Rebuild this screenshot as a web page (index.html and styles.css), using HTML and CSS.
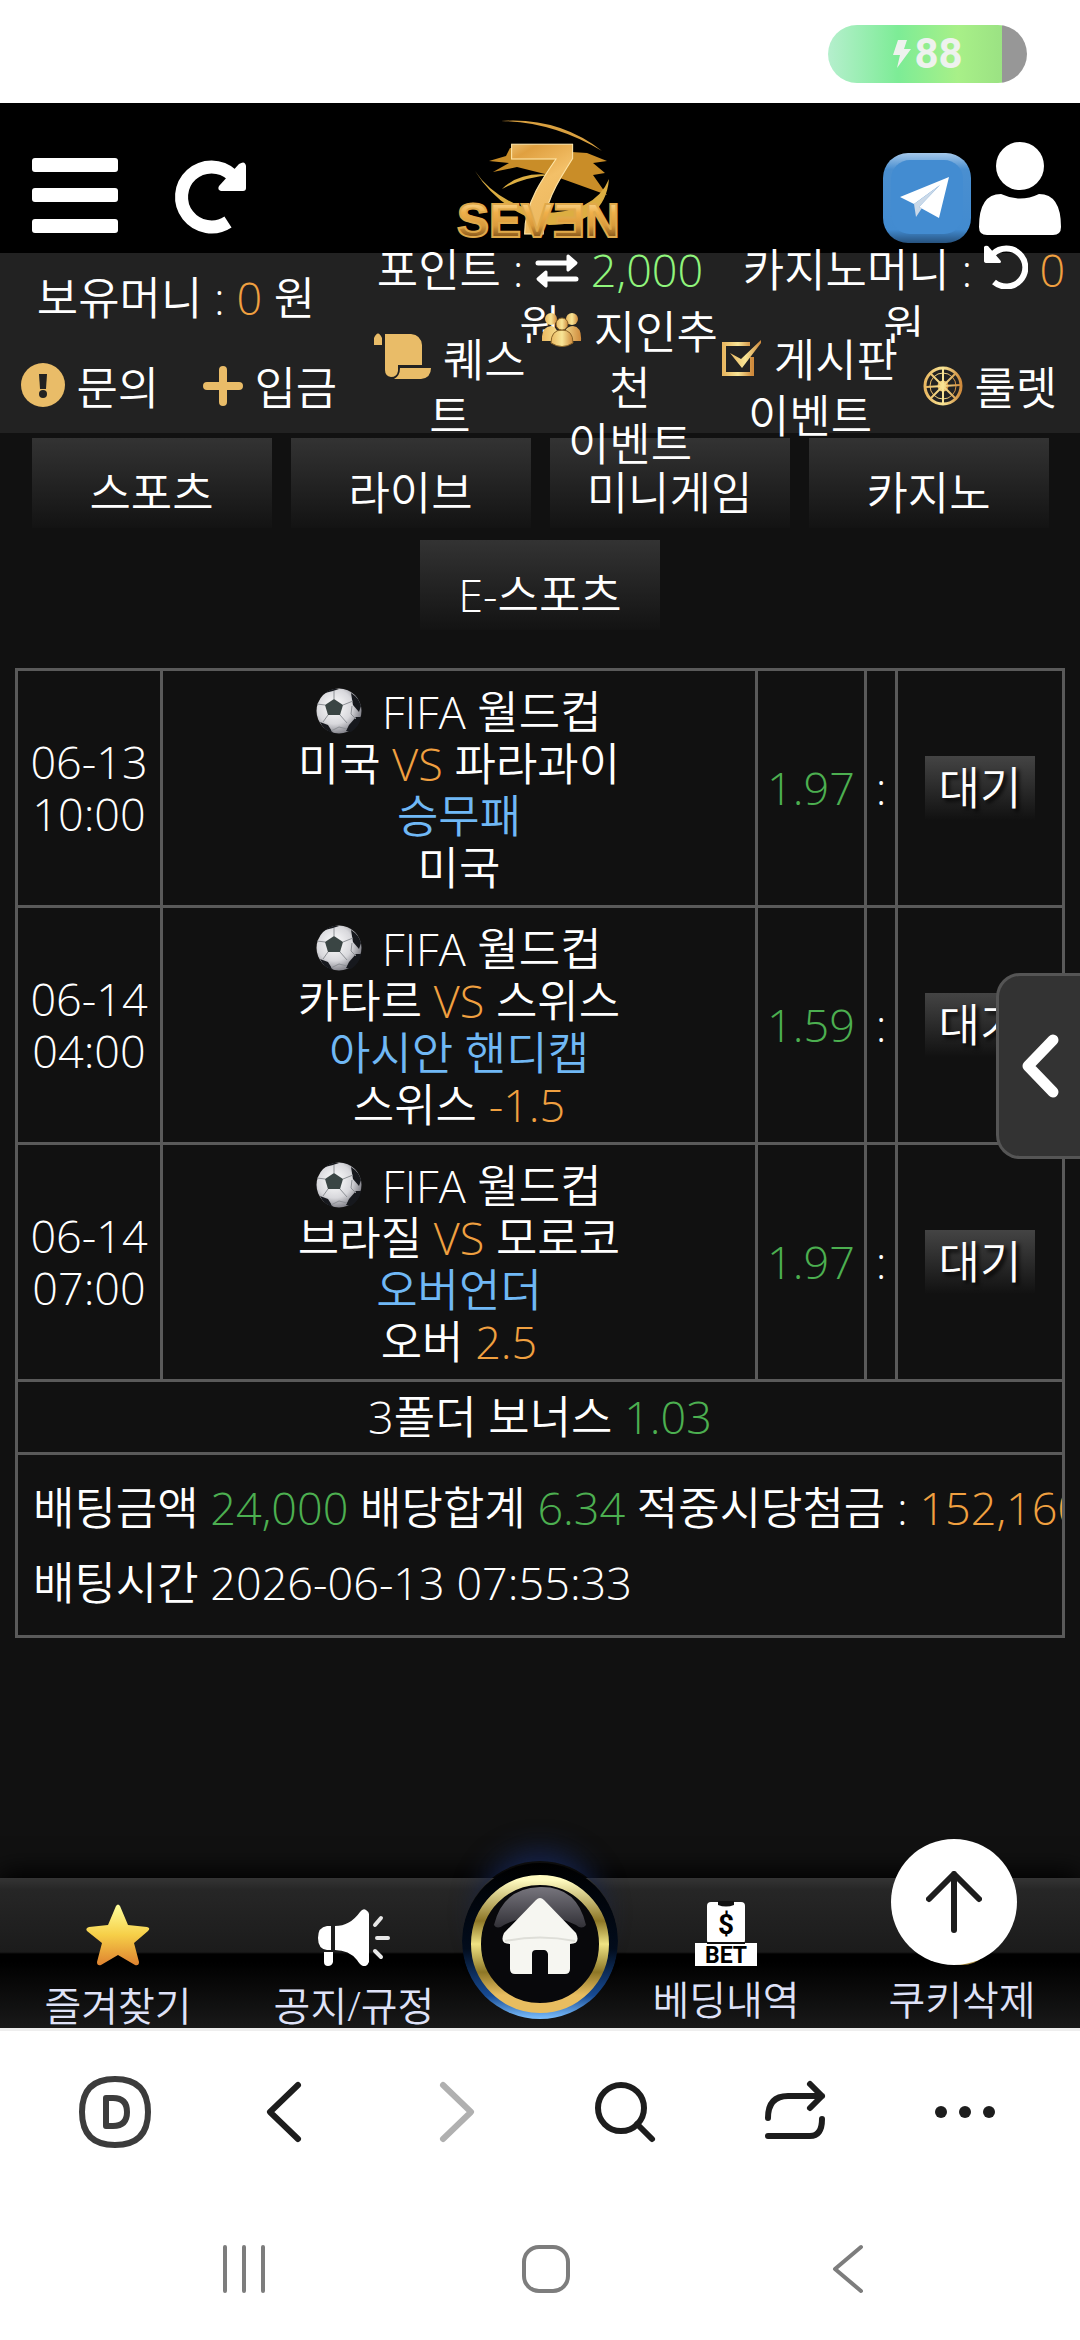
FILE: index.html
```html
<!DOCTYPE html>
<html lang="ko">
<head>
    <meta charset="utf-8">
    <meta name="viewport" content="width=device-width">
    <title>SEVEN</title>
    <link rel="stylesheet" href="styles.css">
</head>
<body>

<!-- Shared icons and gradients -->
<svg class="defs" width="0" height="0">
    <defs>
        <linearGradient id="gold" x1="0" y1="0" x2="0" y2="1">
            <stop offset="0" stop-color="#fff3c4"/>
            <stop offset="0.35" stop-color="#f0b04a"/>
            <stop offset="0.6" stop-color="#d99a3c"/>
            <stop offset="0.8" stop-color="#8a5a1c"/>
            <stop offset="1" stop-color="#f2c766"/>
        </linearGradient>
        <linearGradient id="gold2" x1="0" y1="0" x2="1" y2="0">
            <stop offset="0" stop-color="#e9b862"/>
            <stop offset="0.5" stop-color="#f8e596"/>
            <stop offset="1" stop-color="#cf8a3c"/>
        </linearGradient>
        <linearGradient id="gold3" x1="0" y1="0" x2="0.3" y2="1">
            <stop offset="0" stop-color="#fff0b8"/>
            <stop offset="0.3" stop-color="#e0a040"/>
            <stop offset="0.55" stop-color="#f3c068"/>
            <stop offset="1" stop-color="#e8b45c"/>
        </linearGradient>
        <radialGradient id="leather" cx="0.4" cy="0.4" r="0.65">
            <stop offset="0" stop-color="#ffffff"/>
            <stop offset="0.6" stop-color="#d8d8dc"/>
            <stop offset="1" stop-color="#77777f"/>
        </radialGradient>
    </defs>
    <symbol id="ball" viewBox="0 0 46 46">
        <circle cx="23" cy="23" r="22.5" fill="url(#leather)"/>
        <path d="M18 11l9 6-3 10H12L9 17z" fill="#3a4544"/>
        <path d="M35 5q8 5 10 13l-2 6-6-7zM45 29q-1 9-10 15l-5-1 3-6 7-8zM4 34l8 3 5 8Q8 43 4 34zM9 5Q16 0 23 1l-6 2z" fill="#16181d"/>
        <path d="M18 11V3M27 17l10-4M24 27l7 8M12 27l-5 7M9 17l-8-1M15 43l8-4 8 2M36 18l-1 8 5 5" fill="none" stroke="#8d9095" stroke-width="1"/>
    </symbol>
</svg>

<div class="status-bar">
    <div class="battery">
        <svg width="20" height="30" viewBox="0 0 20 30"><path d="M6 1h9l-3 9h7L5 29l3-13H1z" fill="#eef2ee"/></svg>
        <span>88</span>
    </div>
</div>

<header class="header">
    <div class="header-left">
        <button class="icon-btn" aria-label="menu">
            <svg width="86" height="94" viewBox="0 0 86 94" fill="#fff">
                <rect y="9" width="86" height="14" rx="3"/>
                <rect y="39" width="86" height="14" rx="3"/>
                <rect y="70" width="86" height="14" rx="3"/>
            </svg>
        </button>
        <button class="icon-btn" aria-label="refresh">
            <svg width="76" height="94" viewBox="0 0 76 94">
                <path d="M56 73A30 30 0 1 1 60 26" fill="none" stroke="#fff" stroke-width="13"/>
                <path d="M74 17v22q0 3-3 3H49q-4-1-2-5L67 15q6-4 7 2z" fill="#fff"/>
            </svg>
        </button>
    </div>
    <a class="logo" href="#" aria-label="SEVEN">
        <svg width="168" height="124" viewBox="0 0 168 124">
            <path d="M45 2q58-4 101 30Q98 3 45 2z" fill="#d9a040"/>
            <path d="M54 29l-4 8-17 5 20 2-16 9 24-5 40 10 50 18-14-20 12-2-12-10 14-2-20-8z" fill="#c98d28"/>
            <path d="M46 70q18-18 50-14-28 2-50 14zM19 52q20 30 66 42 54 0 68-34-4 46-60 46Q44 92 19 52z" fill="#dcae42"/>
            <text class="logo-seven" x="50" y="115" fill="url(#gold3)" stroke="#ffe6a8" stroke-width="1">7</text>
            <text class="logo-name" x="1" y="118" fill="url(#gold)" stroke="#e0a94a" stroke-width="2">SEVƎN</text>
        </svg>
    </a>
    <div class="header-right">
        <a href="#" aria-label="telegram">
            <svg width="90" height="94" viewBox="0 0 90 94">
                <defs>
                    <linearGradient id="tg" x1="0" y1="0" x2="0" y2="1">
                        <stop offset="0" stop-color="#a5c8ea"/>
                        <stop offset="0.18" stop-color="#4a8fd0"/>
                        <stop offset="0.85" stop-color="#428bd0"/>
                        <stop offset="1" stop-color="#27527e"/>
                    </linearGradient>
                </defs>
                <rect x="1" y="4" width="88" height="90" rx="25" fill="url(#tg)"/>
                <rect x="9" y="11" width="72" height="74" rx="19" fill="#438cd1"/>
                <path d="M67 28L18 48l14 7 26-19-21 22 20 11z" fill="#fff"/>
                <path d="M32 55l2 13 6-9-3-1 21-22z" fill="#cbd9e8"/>
            </svg>
        </a>
        <a href="#" aria-label="my page">
            <svg width="84" height="102" viewBox="0 0 84 102" fill="#fff">
                <circle cx="42" cy="25" r="24"/>
                <path d="M1 86q0-33 22-33 19 9 38 0 22 0 22 33 0 8-8 8H9q-8 0-8-8z"/>
            </svg>
        </a>
    </div>
</header>

<div class="info">
    <div class="info-row money">
        <div>보유머니 : <span class="orange">0</span> 원</div>
        <div>포인트 :
            <svg width="44" height="36" viewBox="0 0 44 36" fill="none" stroke="#fff" stroke-width="5" stroke-linecap="round"><path d="M3 10h32M41 26H9"/><path d="M33 3l8 7-8 7zM11 19l-8 7 8 7z" fill="#fff" stroke-width="3" stroke-linejoin="round"/></svg>
            <span class="lime">2,000</span><br>원</div>
        <div>카지노머니 :
            <svg width="44" height="46" viewBox="0 0 44 46"><path d="M10 39A19 19 0 1 0 9 11" fill="none" stroke="#fff" stroke-width="6"/><path d="M0 4v14q0 2 3 2h13q2-1 0-3L4 3Q1 2 0 4z" fill="#fff"/></svg>
            <span class="orange">0</span><br>원</div>
    </div>
    <div class="info-row links">
        <a href="#"><svg width="44" height="44" viewBox="0 0 44 44"><circle cx="22" cy="22" r="22" fill="#e9bc68"/><path d="M18 11h8l-1 15h-6z" fill="#222"/><circle cx="22" cy="31" r="4" fill="#222"/></svg> 문의</a>
        <a href="#"><svg width="40" height="44" viewBox="0 0 40 44"><path d="M20 7v32M4 23h32" stroke="#e9bc68" stroke-width="8" stroke-linecap="round"/></svg> 입금</a>
        <a href="#"><svg width="57" height="46" viewBox="0 0 57 46" fill="#e9bc68"><path d="M0 12V5q4-9 8 0v7zM11 1h26q10 1 11 11v20H24v6q-1 6-7 6-6-1-6-7z"/><path d="M26 35h31q0 10-10 11H20q6-3 6-11z"/></svg> 퀘스<br>트</a>
        <a href="#"><svg width="40" height="44" viewBox="0 0 40 44" fill="url(#gold2)"><circle cx="9" cy="12" r="6"/><circle cx="30" cy="12" r="6"/><path d="M0 34q-1-14 9-15 6 0 10 15zM20 34q2-15 11-15 9 1 8 15z"/><g stroke="#8a6428" stroke-width="1"><path d="M9 36q0-13 11-13t11 13q-11 7-22 0z"/><circle cx="20" cy="17" r="6"/></g></svg> 지인추<br>천<br>이벤트</a>
        <a href="#"><svg width="40" height="44" viewBox="0 0 40 44"><path d="M30 22v17H2V9h26" fill="none" stroke="url(#gold2)" stroke-width="4"/><path d="M8 18l11 6L39 5v3L20 33z" fill="url(#gold2)"/></svg> 게시판<br>이벤트</a>
        <a href="#"><svg width="40" height="44" viewBox="0 0 40 44" fill="none" stroke="url(#gold2)" stroke-width="3"><circle cx="20" cy="23" r="18"/><circle cx="20" cy="23" r="13" stroke-width="1"/><circle cx="20" cy="23" r="4" fill="#e9bc68"/><path d="M20 6v35M3 24l34-2M8 11l24 24M8 35l24-24" stroke-width="2"/></svg> 룰렛</a>
    </div>
</div>

<main class="content">
    <nav class="tabs">
        <button>스포츠</button>
        <button>라이브</button>
        <button>미니게임</button>
        <button>카지노</button>
        <button>E-스포츠</button>
    </nav>

    <table class="bets">
        <colgroup>
            <col class="col-date">
            <col>
            <col class="col-rate">
            <col class="col-score">
            <col class="col-state">
        </colgroup>
        <tr>
            <td>06-13<br>10:00</td>
            <td class="match"><svg class="ball" width="46" height="46"><use href="#ball"/></svg> FIFA 월드컵<br>미국 <span class="orange">VS</span> 파라과이<br><span class="blue">승무패</span><br>미국</td>
            <td class="green">1.97</td>
            <td>:</td>
            <td><span class="badge">대기</span></td>
        </tr>
        <tr>
            <td>06-14<br>04:00</td>
            <td class="match"><svg class="ball" width="46" height="46"><use href="#ball"/></svg> FIFA 월드컵<br>카타르 <span class="orange">VS</span> 스위스<br><span class="blue">아시안 핸디캡</span><br>스위스 <span class="orange">-1.5</span></td>
            <td class="green">1.59</td>
            <td>:</td>
            <td><span class="badge">대기</span></td>
        </tr>
        <tr>
            <td>06-14<br>07:00</td>
            <td class="match"><svg class="ball" width="46" height="46"><use href="#ball"/></svg> FIFA 월드컵<br>브라질 <span class="orange">VS</span> 모로코<br><span class="blue">오버언더</span><br>오버 <span class="orange">2.5</span></td>
            <td class="green">1.97</td>
            <td>:</td>
            <td><span class="badge">대기</span></td>
        </tr>
        <tr>
            <td class="bonus" colspan="5">3폴더 보너스 <span class="green">1.03</span></td>
        </tr>
        <tr>
            <td class="summary" colspan="5">배팅금액 <span class="green">24,000</span> 배당합계 <span class="green">6.34</span> 적중시당첨금 : <span class="orange">152,160</span><br>배팅시간 2026-06-13 07:55:33</td>
        </tr>
    </table>
</main>

<button class="side-handle" aria-label="open">
    <svg width="42" height="66" viewBox="0 0 42 66"><path d="M34 7L9 33l25 26" fill="none" stroke="#fff" stroke-width="11" stroke-linecap="round" stroke-linejoin="round"/></svg>
</button>

<nav class="bottom-menu">
    <a href="#">
        <svg width="64" height="66" viewBox="0 0 64 66">
            <defs><linearGradient id="star" x1="0" y1="0" x2="0" y2="1"><stop offset="0" stop-color="#ffff9c"/><stop offset="0.5" stop-color="#f6cf48"/><stop offset="1" stop-color="#df8330"/></linearGradient></defs>
            <path d="M30 6q2-3 4 0l8 19 19 2q4 1 1 4L48 43l5 19q0 4-4 3L32 55 15 65q-4 1-4-3l5-19L1 31q-2-3 2-4l19-2z" fill="url(#star)"/>
        </svg>
        즐겨찾기
    </a>
    <a href="#">
        <svg width="74" height="66" viewBox="0 0 74 66" fill="#fff">
            <path d="M14 26v24H10q-9-1-9-12t9-12zM7 52h9v10q-1 4-5 4t-4-4zM18 26q15 0 25-14 3-4 6-2 3 2 3 4v48q-2 5-6 4-3-1-6-6-8-10-22-10z"/>
            <path d="M58 25l6-7M60 38h11M58 51l6 6" stroke="#e8e8e8" stroke-width="4" stroke-linecap="round"/>
        </svg>
        공지/규정
    </a>
    <a class="home" href="#" aria-label="home">
        <svg width="156" height="160" viewBox="0 0 156 160">
            <defs>
                <linearGradient id="ring" x1="0" y1="0" x2="0" y2="1">
                    <stop offset="0" stop-color="#fffbc0"/>
                    <stop offset="0.32" stop-color="#8d7626"/>
                    <stop offset="0.5" stop-color="#efe383"/>
                    <stop offset="0.72" stop-color="#8d7626"/>
                    <stop offset="0.9" stop-color="#e8bd60"/>
                </linearGradient>
                <linearGradient id="rim" x1="0" y1="0" x2="0" y2="1">
                    <stop offset="0" stop-color="#000"/>
                    <stop offset="0.55" stop-color="#020c1c"/>
                    <stop offset="0.85" stop-color="#174b94"/>
                    <stop offset="1" stop-color="#7cc0ff"/>
                </linearGradient>
                <linearGradient id="gloss" x1="0" y1="0" x2="0" y2="1">
                    <stop offset="0" stop-color="#77757d"/>
                    <stop offset="1" stop-color="#323137"/>
                </linearGradient>
            </defs>
            <circle cx="78" cy="80" r="78" fill="url(#rim)"/>
            <circle cx="78" cy="83" r="64" fill="#08080b" stroke="url(#ring)" stroke-width="10"/>
            <path d="M32 64Q41 27 78 26t46 38q-4 5-10 0-36-18-72 0-7 5-10 0z" fill="url(#gloss)"/>
            <path d="M74 39q4-4 8 0l32 33q5 11-6 11v25q0 5-5 5H86V93q-1-4-4-4h-8q-4 0-4 4v20H53q-5 0-5-5V83q-11 0-6-11z" fill="#f6f6f1"/>
            <path d="M43 80q35-7 70 0" fill="none" stroke="#deded8" stroke-width="2"/>
        </svg>
    </a>
    <a class="raised" href="#">
        <svg width="66" height="66" viewBox="0 0 66 66">
            <rect x="14" y="2" width="38" height="42" rx="4" fill="#fff"/>
            <path d="M25 1h16v4q-8 3-16 0z" fill="#111"/>
            <text class="bet-dollar" x="33" y="34" text-anchor="middle">$</text>
            <rect x="2" y="43" width="62" height="23" fill="#fff"/>
            <path d="M14 43h38" stroke="#111" stroke-width="2"/>
            <text class="bet-word" x="33" y="63" text-anchor="middle">BET</text>
        </svg>
        베딩내역
    </a>
    <a class="raised" href="#">
        <svg width="66" height="66" viewBox="0 0 66 66"><circle cx="33" cy="34" r="31" fill="#a88a3c"/></svg>
        쿠키삭제
    </a>
    <button class="to-top" aria-label="top">
        <svg width="56" height="62" viewBox="0 0 56 62"><path d="M28 3v56M3 28L28 3l25 25" fill="none" stroke="#1d1d1d" stroke-width="6" stroke-linecap="round" stroke-linejoin="round"/></svg>
    </button>
</nav>

<!-- Browser toolbar -->
<div class="toolbar">
    <button aria-label="home page">
        <svg width="72" height="72" viewBox="0 0 72 72"><path d="M36 3q33 0 33 33T36 69 3 36 36 3z" fill="none" stroke="#3c3c3c" stroke-width="6"/><path d="M27 22h7q14 0 14 14T34 50h-7z" fill="none" stroke="#3c3c3c" stroke-width="6" stroke-linejoin="round"/></svg>
    </button>
    <button aria-label="back">
        <svg width="72" height="72" viewBox="0 0 72 72"><path d="M49 9L21 36l28 27" fill="none" stroke="#1d1d1d" stroke-width="6" stroke-linecap="round" stroke-linejoin="round"/></svg>
    </button>
    <button aria-label="forward">
        <svg width="72" height="72" viewBox="0 0 72 72"><path d="M24 9l28 27-28 27" fill="none" stroke="#b0b0b0" stroke-width="6" stroke-linecap="round" stroke-linejoin="round"/></svg>
    </button>
    <button aria-label="search">
        <svg width="72" height="72" viewBox="0 0 72 72"><circle cx="32" cy="32" r="23" fill="none" stroke="#1d1d1d" stroke-width="6"/><path d="M48 48l15 15" stroke="#1d1d1d" stroke-width="6" stroke-linecap="round"/></svg>
    </button>
    <button aria-label="switch">
        <svg width="72" height="72" viewBox="0 0 72 72" fill="none" stroke="#1d1d1d" stroke-width="6" stroke-linecap="round" stroke-linejoin="round"><path d="M9 42q0-22 20-22h34M51 8l12 12-12 12"/><path d="M63 43q0 17-12 17H9"/></svg>
    </button>
    <button aria-label="more">
        <svg width="72" height="72" viewBox="0 0 72 72" fill="#1d1d1d"><circle cx="12" cy="36" r="6"/><circle cx="36" cy="36" r="6"/><circle cx="60" cy="36" r="6"/></svg>
    </button>
</div>

<!-- System navigation -->
<div class="system-nav">
    <button aria-label="recents">
        <svg width="50" height="50" viewBox="0 0 50 50"><path d="M6 3v44M25 3v44M44 3v44" stroke="#7d7d7d" stroke-width="4" stroke-linecap="round"/></svg>
    </button>
    <button aria-label="home">
        <svg width="50" height="50" viewBox="0 0 50 50"><rect x="3" y="3" width="44" height="44" rx="15" fill="none" stroke="#7d7d7d" stroke-width="4"/></svg>
    </button>
    <button aria-label="back">
        <svg width="50" height="50" viewBox="0 0 50 50"><path d="M38 3L12 25l26 22" fill="none" stroke="#7d7d7d" stroke-width="4" stroke-linecap="round" stroke-linejoin="round"/></svg>
    </button>
</div>

</body>
</html>
```
FILE: styles.css
```css
* {
    box-sizing: border-box;
}
body {
    margin: 0;
    min-height: 100vh;
    display: flex;
    flex-direction: column;
    position: relative;
    overflow-x: hidden;
    background: #111;
    color: #fff;
    font-family: "Open Sans", "Noto Sans CJK KR", sans-serif;
    font-weight: 350;
    font-size: 45px;
    line-height: 56px;
}
a {
    color: inherit;
    text-decoration: none;
}
button {
    padding: 0;
    border: none;
    background: none;
    color: inherit;
    font: inherit;
    cursor: pointer;
}
svg {
    flex: none;
}
.defs {
    position: absolute;
}
.orange { color: #f0a040; }
.lime { color: #90f57c; }
.green { color: #4caf50; }
.blue { color: #70b8f5; }

/* Status bar */
.status-bar {
    display: flex;
    justify-content: flex-end;
    padding: 25px 53px 20px;
    background: #fff;
}
.battery {
    display: flex;
    align-items: center;
    justify-content: center;
    gap: 2px;
    width: 199px;
    height: 58px;
    border-radius: 29px;
    background: linear-gradient(90deg, #b5efcd 0, #7dec96 70px, #a8f088 130px, #9be283 174px, #979797 174px);
    color: #eef2ee;
    font: bold 42px/58px Roboto, sans-serif;
}

/* Header */
.header {
    display: flex;
    align-items: flex-end;
    height: 150px;
    padding: 0 18px 10px;
    background: #000;
}
.header svg {
    display: block;
}
.header-left, .header-right {
    display: flex;
    align-items: flex-end;
    flex: 1;
}
.header-left {
    gap: 54px;
}
.header-left button:first-child {
    margin-left: 14px;
}
.header-right {
    justify-content: flex-end;
    gap: 6px;
}
.logo-seven {
    font: bold 130px "Liberation Sans", sans-serif;
}
.logo-name {
    font: bold 48px "Liberation Sans", sans-serif;
}

/* Money and quick links, tall items spill over the rows around them */
.info {
    position: relative;
    z-index: 1;
}
.info-row {
    display: grid;
    grid-template-rows: 90px;
    align-items: center;
    background: #222;
    text-align: center;
    white-space: nowrap;
}
.money {
    grid-template-columns: repeat(3, minmax(0, 1fr));
    gap: 12px;
}
.links {
    position: relative;
    grid-template-columns: repeat(6, minmax(0, 1fr));
}
.info-row svg {
    vertical-align: -2px;
}

/* Tabs */
.content {
    flex: 1;
}
.tabs {
    display: flex;
    flex-wrap: wrap;
    justify-content: center;
    gap: 12px 19px;
    padding: 5px 15px 38px;
}
.tabs button {
    width: 240px;
    height: 90px;
    padding-top: 20px;
    background: linear-gradient(#333, #131313);
}

/* Bet slip */
.bets {
    width: calc(100% - 30px);
    margin: 0 15px;
    table-layout: fixed;
    border-collapse: collapse;
    line-height: 52px;
    text-align: center;
}
.bets td {
    height: 237px;
    padding: 0;
    border: 3px solid #5a5a5a;
    overflow: hidden;
    white-space: nowrap;
}
.bets .match {
    padding-top: 4px;
}
.col-date { width: 145px; }
.col-rate { width: 109px; }
.col-score { width: 31px; }
.col-state { width: 167px; }
.ball {
    margin-right: 8px;
    vertical-align: -5px;
}
.badge {
    display: inline-block;
    padding: 6px 14px;
    background: linear-gradient(#444, #111);
    text-shadow: 3px 3px 4px #000;
}
.bets .bonus {
    height: 73px;
}
.bets .summary {
    height: 183px;
    padding: 0 15px;
    line-height: 75px;
    text-align: left;
}

/* Drawer handle on the right edge */
.side-handle {
    position: absolute;
    top: 973px;
    right: 0;
    width: 84px;
    height: 186px;
    border: 3px solid #555;
    border-right: none;
    border-radius: 24px 0 0 24px;
    background: #333;
}
.side-handle svg {
    display: block;
    margin: 0 auto;
}

/* Bottom menu */
.bottom-menu {
    position: relative;
    display: flex;
    height: 150px;
    background: linear-gradient(#343434 0, #262626 12px, #1b1b1b 74px, #000 76px, #000 84px, #191919 150px);
    box-shadow: 0 -6px 24px #000;
    color: #dfe2f8;
    font-size: 40px;
    line-height: 52px;
}
.bottom-menu > a {
    display: flex;
    flex: 1;
    flex-direction: column;
    align-items: center;
    gap: 14px;
    min-width: 0;
    padding-top: 22px;
}
.bottom-menu .raised {
    gap: 8px;
}
.bottom-menu .home {
    flex: 0 0 136px;
    margin-top: -17px;
    padding: 0;
}
.home svg {
    border-radius: 50%;
    box-shadow: 0 -28px 28px -18px #16244e;
}
.bet-dollar {
    font: bold 28px Roboto, sans-serif;
}
.bet-word {
    font: bold 23px Roboto, sans-serif;
}
.to-top {
    position: absolute;
    top: -39px;
    right: 63px;
    width: 126px;
    height: 126px;
    border-radius: 50%;
    background: #fff;
}
.to-top svg {
    display: block;
    margin: 0 auto;
}

/* Browser and system bars */
.toolbar, .system-nav {
    position: relative;
    display: grid;
    justify-items: center;
    background: #fff;
}
.toolbar {
    grid-template-columns: repeat(6, 1fr);
    padding: 45px 30px 49px;
    border-top: 3px solid #eee;
}
.system-nav {
    grid-template-columns: repeat(3, 1fr);
    padding: 47px 81px 46px 93px;
}
.toolbar svg, .system-nav svg {
    display: block;
}
```
